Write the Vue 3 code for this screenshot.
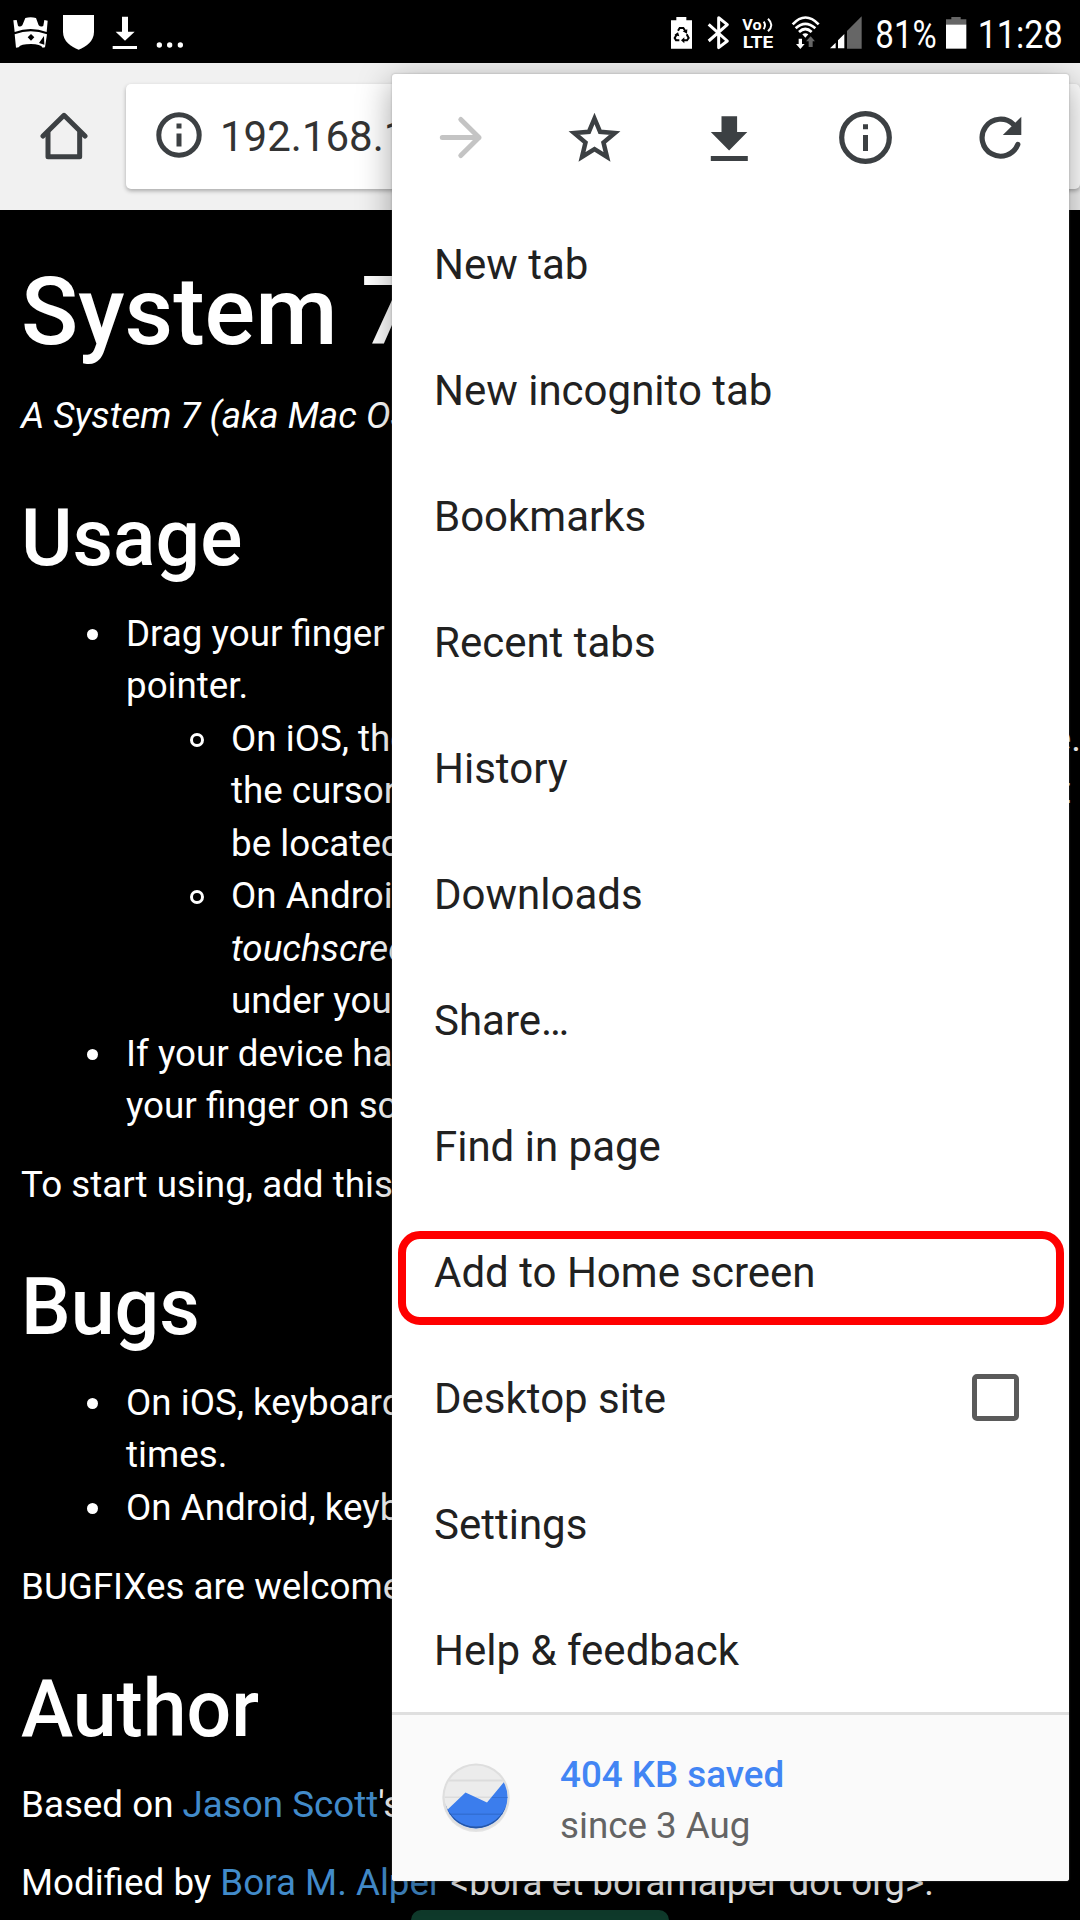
<script setup>
const items = [
  { label: 'New tab' },
  { label: 'New incognito tab' },
  { label: 'Bookmarks' },
  { label: 'Recent tabs' },
  { label: 'History' },
  { label: 'Downloads' },
  { label: 'Share…' },
  { label: 'Find in page' },
  { label: 'Add to Home screen', marked: true },
  { label: 'Desktop site', checkbox: true },
  { label: 'Settings' },
  { label: 'Help & feedback' },
]
</script>

<template>
  <div class="phone">
    <header class="status">
      <svg width="200" height="63" viewBox="0 0 600 189" fill="#fff">
        <path d="M40 61L50 60L54 77Q60 83 67 76L76 54Q92 49 108 54L116 76Q123 83 130 77L133 60L143 62L140 96Q92 78 44 96Z" />
        <path d="M44 103Q92 84 141 103L135 142L128 143Q122 132 93 132Q62 132 56 142L48 143Z" />
        <path d="M93 102L103 112L93 122L83 112ZM132 108L133 134L117 129Z" fill="#000" />
        <path d="M189 45H282V95C282 124 258 140 236 149C213 140 189 124 189 95Z" />
        <path d="M366 50H384V95H404L375 122L347 95H366ZM338 138H411V147H338Z" />
        <circle cx="478" cy="135" r="8" /><circle cx="509" cy="135" r="8" /><circle cx="541" cy="135" r="8" />
      </svg>
      <svg width="440" height="63" viewBox="0 0 1320 189" fill="#fff">
        <path d="M93 61H109V51H139V61H156V146H93Z" />
        <g fill="none" stroke="#000" stroke-width="6">
          <path d="M114 92L119 84H130L136 93" />
          <path d="M140 103L146 114L141 121H131" />
          <path d="M118 121H108L104 114L111 102" />
        </g>
        <path d="M128 94L142 88L141 101ZM133 112V130L123 121ZM103 105L114 97L118 109Z" fill="#000" />
        <path d="M206 73L262 123L236 143V53L262 74L206 123" fill="none" stroke="#fff" stroke-width="9" stroke-linejoin="round" />
        <text x="307" y="90" font-size="44" font-weight="700" textLength="58" lengthAdjust="spacingAndGlyphs">Vo</text>
        <path d="M371 65Q379 75 371 88M384 56Q404 75 384 94" fill="none" stroke="#fff" stroke-width="6" />
        <text x="308" y="144" font-size="51" font-weight="700" textLength="92" lengthAdjust="spacingAndGlyphs">LTE</text>
        <g fill="none" stroke="#fff" stroke-width="8">
          <path d="M458 73Q496 32 536 73" /><path d="M467 85Q496 58 526 85" /><path d="M477 96Q496 78 515 96" />
        </g>
        <path d="M487 103Q496 97 505 103L496 113ZM476 116H486V132H494L481 147L468 132H476Z" />
        <path d="M506 141H518V124H525L512 109L498 124H506Z" fill="#666" />
        <path d="M570 145L587 128V145ZM594 145V121L613 102V145Z" />
        <path d="M621 146V93L665 49V146ZM918 58H934V51H962V58H979V75H918Z" fill="#666" />
        <text x="706" y="144" font-size="116" textLength="184" lengthAdjust="spacingAndGlyphs">81%</text>
        <path d="M918 74H979V146H918Z" />
        <text x="1013" y="144" font-size="116" textLength="255" lengthAdjust="spacingAndGlyphs">11:28</text>
      </svg>
    </header>

    <div class="toolbar">
      <svg class="home" width="48" height="48" viewBox="0 0 144 144" fill="none" stroke="#3c4043" stroke-width="15" stroke-linecap="round" stroke-linejoin="round">
        <path d="M9 72L72 10L135 72" /><path d="M24 62V134H119V62" />
      </svg>
      <div class="url">
        <svg width="46" height="46" viewBox="0 0 46 46"><circle cx="23" cy="23" r="20.2" fill="none" stroke="#3c4043" stroke-width="5" /><path d="M20.5 11.500h5v5h-5zM20.500 21.500h5v13h-5z" fill="#3c4043" /></svg>
        <span>192.168.1</span>
      </div>
    </div>

    <main class="page">
      <h1>System 7</h1>
      <p><em>A System 7 (aka Mac OS</em></p>
      <h2>Usage</h2>
      <ul>
        <li class="disc">Drag your finger<br>pointer.
          <ul>
            <li>
              <div class="split"><span class="ring">On iOS, the</span><span class="dot">e.</span></div>
              <div class="split"><span>the cursor</span><span class="tee">t</span></div>
              <div>be located</div>
            </li>
            <li class="ring">On Android<br><em>touchscreen</em><br>under your</li>
          </ul>
        </li>
        <li class="disc">If your device has<br>your finger on sc</li>
      </ul>
      <p>To start using, add this</p>
      <h2>Bugs</h2>
      <ul>
        <li class="disc">On iOS, keyboard<br>times.</li>
        <li class="disc">On Android, keyb</li>
      </ul>
      <p>BUGFIXes are welcome</p>
      <h2>Author</h2>
      <p>Based on <a>Jason Scott</a>'s</p>
      <p class="last">Modified by <a>Bora M. Alper</a> &lt;bora et boramalper dot org&gt;.</p>
      <div class="button"></div>
    </main>

    <aside class="menu">
      <div class="actions">
        <svg viewBox="0 0 54 54" fill="none" stroke="#c4c4c4" stroke-width="5" stroke-linecap="round" stroke-linejoin="round"><path d="M9.300 27.500H46L27.800 9.500M46 27.500L27.800 45.500" /></svg>
        <svg viewBox="0 0 54 54"><path d="M26.500 8.500L32.100 21.800L46.800 23L35.500 32.500L39 47L26.500 39.200L14 47L17.500 32.500L6.200 23L20.900 21.800Z" fill="none" stroke="#3c4043" stroke-width="4.500" /></svg>
        <svg viewBox="0 0 54 54" fill="#3c4043"><path d="M18.500 6.300H34.100V22H44.300L26.100 40.600L7.800 22H18.500ZM7.800 46H44.800V51H7.800Z" /></svg>
        <svg viewBox="0 0 54 54"><circle cx="26.500" cy="27.500" r="23.800" fill="none" stroke="#3c4043" stroke-width="5.200" /><path d="M24 14.300h5v5h-5zM24 25h5v16h-5z" fill="#3c4043" /></svg>
        <svg viewBox="0 0 54 54"><path d="M43.800 34.500A18.500 18.500 0 1 1 39.400 14.300" fill="none" stroke="#3c4043" stroke-width="5.200" stroke-linecap="round" /><path d="M47.300 6.800V25H28.800Z" fill="#3c4043" /></svg>
      </div>
      <div v-for="item in items" :key="item.label" class="item" :class="{ marked: item.marked }">
        <span>{{ item.label }}</span>
        <i v-if="item.checkbox" class="box"></i>
      </div>
      <div class="saved">
        <svg width="68" height="70" viewBox="0 0 68 70">
          <defs><clipPath id="disc"><circle cx="34" cy="34" r="31.500" /></clipPath></defs>
          <circle cx="34" cy="35.500" r="33.500" fill="#e4e4e4" />
          <circle cx="34" cy="34" r="33.500" fill="#dedede" />
          <circle cx="34" cy="34" r="31.500" fill="#ececec" />
          <g clip-path="url(#disc)">
            <path d="M0 16.500H68V18.500H0ZM0 33.500H68V35H0Z" fill="#dcdcdc" />
            <path d="M0 52L23.500 29.500L45 39.500L62 19L68 30V70H0Z" fill="#3b7ded" />
            <path d="M5 50.500H68V52H5ZM50 34H68V35H50Z" fill="#326fd5" />
            <path d="M3.100 40A31.500 31.500 0 0 0 64.900 40A32.060 32.060 0 0 1 3.100 40Z" fill="#2656a5" />
          </g>
        </svg>
        <div><strong>404 KB saved</strong><span>since 3 Aug</span></div>
      </div>
    </aside>
  </div>
</template>

<style>
body { margin: 0; background: #000; }
</style>

<style scoped>
.phone {
  position: relative;
  width: 1080px;
  height: 1920px;
  overflow: hidden;
  background: #000;
  color: #fff;
  font-family: Roboto, "Liberation Sans", sans-serif;
  font-size: 36.75px;
  line-height: 52.5px;
}
svg { display: block; flex: none; }
.status { display: flex; justify-content: space-between; height: 63px; background: #000; }
.toolbar { display: flex; height: 147px; background: #f1f1f1; }
.home { margin: 49px 38.500px 0 39.500px; }
.url {
  display: flex;
  flex: 1;
  align-items: center;
  height: 105px;
  box-sizing: border-box;
  margin-top: 21px;
  padding: 0 0 3px 29.500px;
  gap: 18.500px;
  border-radius: 5px;
  background: #fff;
  box-shadow: 0 2px 4px rgba(0, 0, 0, .3);
  color: #333;
  font-size: 42px;
}
.url span { padding-top: 5px; }
.page { padding: 49.750px 0 0 21px; white-space: nowrap; }
h1, h2 { margin: 0 0 26.250px; font-weight: 500; line-height: 1.1; }
h1 { font-size: 94.500px; }
h2 { margin-top: 52.500px; font-size: 78.750px; }
p { margin: 0 0 26.250px; }
ul { margin: 0 0 26.250px; padding-left: 105px; list-style: none; }
ul ul { margin-bottom: 0; }
.disc::before {
  content: "";
  display: inline-block;
  width: 11px;
  height: 11px;
  margin: 0 28.500px 0 -39.500px;
  border-radius: 50%;
  background: #fff;
  vertical-align: 5.500px;
}
.ring::before {
  content: "";
  display: inline-block;
  width: 8px;
  height: 8px;
  margin: 0 27px 0 -41px;
  border: 3px solid #fff;
  border-radius: 50%;
  vertical-align: 4px;
}
a { color: #428bca; }
.split { display: flex; justify-content: space-between; }
.dot { margin-right: -1px; }
.tee { padding-right: 9px; }
.page .last { margin-bottom: 0; }
.button { width: 258px; height: 60px; margin: 0 auto; position: relative; left: -11px; border-radius: 10px; background: #0f3a2b; }
.menu {
  position: absolute;
  left: 392px;
  top: 74px;
  width: 677px;
  height: 1807px;
  border-radius: 3px;
  background: #fff;
  box-shadow: 0 0 2px rgba(120, 120, 120, .6), 0 8px 34px rgba(0, 0, 0, .36);
  color: #212121;
}
.actions { display: flex; height: 128px; box-sizing: border-box; padding-bottom: 3px; align-items: center; justify-content: space-around; }
.actions svg { width: 54px; height: 54px; }
.item {
  position: relative;
  display: flex;
  align-items: center;
  justify-content: space-between;
  height: 126px;
  padding: 0 50px 0 42px;
  font-size: 42px;
}
.marked::after {
  content: "";
  position: absolute;
  left: 6px;
  top: 21px;
  width: 650px;
  height: 78px;
  border: 8px solid #f00;
  border-radius: 22px;
}
.box { width: 37px; height: 37px; margin-bottom: 4px; border: 5px solid #5a5a5a; border-radius: 5px; }
.saved {
  position: relative;
  display: flex;
  align-items: center;
  gap: 50px;
  height: 166px;
  margin-top: -2px;
  padding-left: 50px;
  border-top: 3px solid #dfdfdf;
  border-radius: 0 0 3px 3px;
  background: #fafafa;
  line-height: 51px;
}
.saved div { display: flex; flex-direction: column; padding-top: 4px; }
.saved strong { color: #4285f4; font-weight: 500; }
.saved span { color: #646464; }
</style>
